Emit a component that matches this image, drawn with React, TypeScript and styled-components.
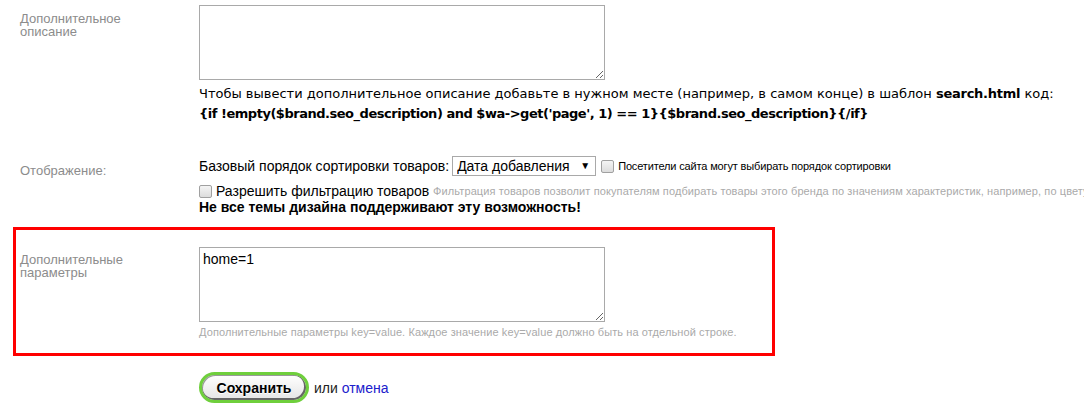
import React from "react";
import styled, { createGlobalStyle } from "styled-components";

const GlobalStyle = createGlobalStyle`
  html, body {
    margin: 0;
    padding: 0;
    background: #fff;
    overflow: hidden;
  }
  body {
    font-family: "Liberation Sans", Arial, sans-serif;
    font-size: 14px;
    color: #000;
  }
`;

const Page = styled.form`
  padding-top: 5px;
  width: 1084px;
`;

const Field = styled.div<{ $highlight?: boolean }>`
  display: grid;
  grid-template-columns: 179px 1fr;
  padding-left: 20px;
  margin-top: ${(p) => (p.$highlight ? "12px" : "0")};

  ${(p) =>
    p.$highlight &&
    `
    margin-left: 13px;
    width: 752px;
    padding: 17px 0 14px 4px;
    border: 3px solid #f00;
  `}
`;

const Label = styled.div<{ $top: number }>`
  padding-top: ${(p) => p.$top}px;
  font-size: 13px;
  line-height: 13px;
  color: #8c8c8c;
`;

const Value = styled.div`
  min-width: 0;
`;

const TextArea = styled.textarea`
  display: block;
  box-sizing: border-box;
  width: 406px;
  height: 75px;
  margin: 0;
  padding: 3px 3px;
  border: 1px solid #a9a9a9;
  font-family: "Liberation Sans", Arial, sans-serif;
  font-size: 14px;
  line-height: 16px;
  color: #000;
  resize: both;
  outline: none;
`;

const Hint = styled.p`
  margin: 4px 0 0;
  font-family: "DejaVu Sans", Verdana, sans-serif;
  font-size: 13px;
  line-height: 20px;
  color: #000;
  white-space: nowrap;
`;

const Code = styled.b<{ $tight?: boolean }>`
  font-weight: bold;
  letter-spacing: ${(p) => (p.$tight ? "-0.48px" : "-0.25px")};
`;

const Line = styled.div<{ $gap?: number }>`
  display: flex;
  align-items: center;
  white-space: nowrap;
  margin-top: ${(p) => p.$gap ?? 0}px;
  line-height: 16px;
`;

const SelectWrap = styled.span`
  position: relative;
  display: inline-block;
  margin-left: 3px;

  &::after {
    content: "▼";
    position: absolute;
    right: 6px;
    top: 3px;
    font-size: 10px;
    line-height: 14px;
    pointer-events: none;
  }
`;

const Select = styled.select`
  appearance: none;
  box-sizing: border-box;
  width: 144px;
  height: 20px;
  margin: 0;
  padding: 0 18px 0 4px;
  border: 1px solid #a9a9a9;
  border-radius: 0;
  background: #fff;
  font-family: "Liberation Sans", Arial, sans-serif;
  font-size: 14px;
  color: #000;
`;

const Check = styled.input.attrs({ type: "checkbox" })`
  appearance: none;
  box-sizing: border-box;
  width: 13px;
  height: 13px;
  margin: 0 4px 0 5px;
  border: 1px solid #a0a0a0;
  border-radius: 2px;
  background: linear-gradient(#f4f4f4, #dcdcdc);
  flex: none;

  &:first-child {
    margin-left: 0;
  }
`;

const Small = styled.span<{ $muted?: boolean }>`
  font-size: 11px;
  color: ${(p) => (p.$muted ? "#aaa" : "#000")};
  letter-spacing: ${(p) => (p.$muted ? "0.1px" : "-0.15px")};
`;

const Warning = styled.div`
  font-weight: bold;
  line-height: 16px;
`;

const Note = styled.div`
  margin-top: 3px;
  font-size: 11px;
  line-height: 14px;
  letter-spacing: 0.1px;
  color: #aaa;
`;

const Actions = styled.div`
  display: flex;
  align-items: center;
  gap: 5px;
  margin: 16px 0 0 199px;
`;

const SaveButton = styled.button`
  box-sizing: border-box;
  width: 110px;
  height: 31px;
  padding: 0;
  border: 3px solid #6fcf3c;
  border-radius: 16px;
  background: linear-gradient(#ffffff, #e4e4e4);
  box-shadow: inset -1px -1px 0 1px #666, inset 1px 1px 0 #999;
  font-family: "Liberation Sans", Arial, sans-serif;
  font-size: 14px;
  font-weight: bold;
  color: #000;
  text-shadow: 0 1px 0 #fff;
`;

const Or = styled.span`
  font-size: 14px;
  color: #222;
`;

const Cancel = styled.a`
  color: #2020cc;
  text-decoration: none;
`;

export default function App() {
  return (
    <>
      <GlobalStyle />
      <Page onSubmit={(e) => e.preventDefault()}>
        <Field>
          <Label $top={7}>
            Дополнительное
            <br />
            описание
          </Label>
          <Value>
            <TextArea defaultValue="" />
            <Hint>
              Чтобы вывести дополнительное описание добавьте в нужном месте
              (например, в самом конце) в шаблон <Code>search.html</Code> код:
              <br />
              <Code $tight>
                {
                  "{if !empty($brand.seo_description) and $wa->get('page', 1) == 1}{$brand.seo_description}{/if}"
                }
              </Code>
            </Hint>
          </Value>
        </Field>

        <Field style={{ marginTop: 32 }}>
          <Label $top={8}>Отображение:</Label>
          <Value>
            <Line>
              Базовый порядок сортировки товаров:
              <SelectWrap>
                <Select defaultValue="date">
                  <option value="date">Дата добавления</option>
                  <option value="name">Название</option>
                  <option value="price">Цена</option>
                </Select>
              </SelectWrap>
              <Check />
              <Small>Посетители сайта могут выбирать порядок сортировки</Small>
            </Line>
            <Line $gap={7}>
              <Check />
              Разрешить фильтрацию товаров&nbsp;
              <Small $muted>
                Фильтрация товаров позволит покупателям подбирать товары этого
                бренда по значениям характеристик, например, по цвету
              </Small>
            </Line>
            <Warning>Не все темы дизайна поддерживают эту возможность!</Warning>
          </Value>
        </Field>

        <Field $highlight>
          <Label $top={6}>
            Дополнительные
            <br />
            параметры
          </Label>
          <Value>
            <TextArea defaultValue="home=1" />
            <Note>
              Дополнительные параметры key=value. Каждое значение key=value
              должно быть на отдельной строке.
            </Note>
          </Value>
        </Field>

        <Actions>
          <SaveButton type="submit">Сохранить</SaveButton>
          <Or>
            или <Cancel href="#">отмена</Cancel>
          </Or>
        </Actions>
      </Page>
    </>
  );
}
